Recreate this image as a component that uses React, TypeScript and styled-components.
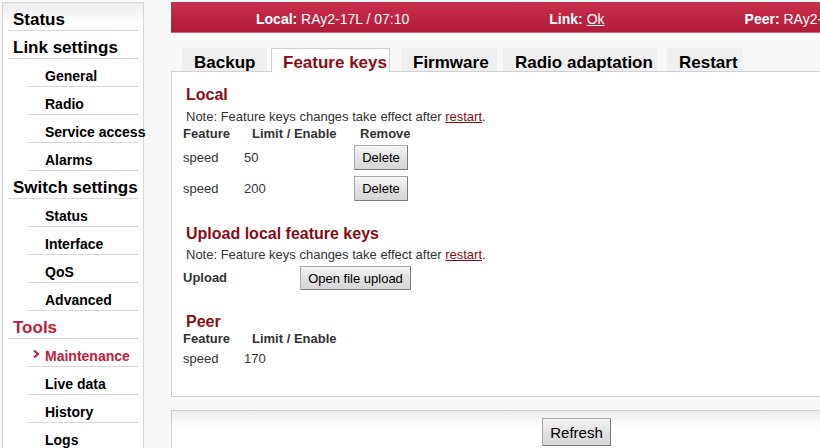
import React from "react";
import styled, { createGlobalStyle } from "styled-components";

const GlobalStyle = createGlobalStyle`
  html, body {
    margin: 0;
    padding: 0;
    overflow: hidden;
    background: #f8f8f8;
    font-family: "Liberation Sans", Arial, sans-serif;
    color: #000;
  }
`;

const Page = styled.div`
  width: 1000px;
  display: grid;
  grid-template-columns: 142px 812px;
  column-gap: 27px;
  align-items: start;
  padding-left: 2px;
`;

// ---------- sidebar ----------

const Sidebar = styled.nav`
  margin-top: 2px;
  border: 1px solid #d6d6d6;
  background: linear-gradient(#ececec, #ffffff 22px);
  padding-bottom: 20px;
`;

const NavItem = styled.div<{ $sub?: boolean; $active?: boolean }>`
  position: relative;
  margin: 0 5px 0 ${(p) => (p.$sub ? "24px" : "5px")};
  padding: 7px 0 0 ${(p) => (p.$sub ? "18px" : "5px")};
  line-height: 20px;
  border-bottom: 1px solid #d8d8d8;
  font-weight: bold;
  font-size: ${(p) => (p.$sub ? "14px" : "17px")};
  color: ${(p) => (p.$active ? "#c0203c" : "#000")};
  white-space: nowrap;
`;

const Chevron = styled.svg`
  position: absolute;
  left: 6px;
  top: 11px;
`;

// ---------- main ----------

const Main = styled.main`
  margin-top: 2px;
  display: flex;
  flex-direction: column;
`;

const Header = styled.header`
  height: 31px;
  box-sizing: border-box;
  padding: 4px 0 0 85px;
  border-bottom: 1px solid #d8667a;
  background: linear-gradient(#c9304e, #b01b37);
  color: #fff;
  display: flex;
  align-items: center;
  gap: 140px;
  font-size: 14px;
  white-space: nowrap;
  overflow: hidden;
`;

const HeadLabel = styled.b`
  font-weight: bold;
`;

const HeadLink = styled.span`
  text-decoration: underline;
`;

const TabBar = styled.div`
  display: flex;
  align-items: flex-end;
  padding: 15px 0 0 11px;
`;

const Tab = styled.div<{ $active?: boolean; $width: number; $gap: number }>`
  box-sizing: border-box;
  width: ${(p) => p.$width}px;
  margin-right: ${(p) => p.$gap}px;
  height: ${(p) => (p.$active ? 24 : 23)}px;
  padding: 5px 0 0 11px;
  line-height: 18px;
  font-size: 17px;
  font-weight: bold;
  white-space: nowrap;
  background: ${(p) => (p.$active ? "#fff" : "#efefef")};
  color: ${(p) => (p.$active ? "#8a0c14" : "#000")};
  border: 1px solid ${(p) => (p.$active ? "#d0d0d0" : "transparent")};
  border-bottom: none;
  margin-bottom: ${(p) => (p.$active ? "-1px" : "0")};
  position: relative;
  z-index: 1;
`;

const Panel = styled.section`
  background: #fff;
  border: 1px solid #d0d0d0;
  padding: 14px 0 27px 11px;
`;

const Heading = styled.h2<{ $top?: number }>`
  margin: ${(p) => p.$top ?? 0}px 0 0 3px;
  font-size: 16px;
  line-height: 18px;
  font-weight: bold;
  color: #8a0c14;
`;

const Note = styled.p<{ $top?: number }>`
  margin: ${(p) => p.$top ?? 4}px 0 0 3px;
  font-size: 13px;
  line-height: 16px;
  color: #333;
`;

const Restart = styled.a`
  color: #8a0c14;
  text-decoration: underline;
`;

const Table = styled.div<{ $top?: number }>`
  margin-top: ${(p) => p.$top ?? 1}px;
  display: grid;
  grid-template-columns: 59px 110px auto;
  justify-content: start;
  font-size: 13px;
  color: #333;
`;

const Th = styled.div<{ $pad?: number }>`
  font-weight: bold;
  line-height: 16px;
  padding-left: ${(p) => p.$pad ?? 0}px;
`;

const Td = styled.div<{ $h: number; $pad?: number }>`
  height: ${(p) => p.$h}px;
  display: flex;
  align-items: center;
  padding-left: ${(p) => p.$pad ?? 0}px;
`;

const Button = styled.button<{ $size?: number }>`
  font-family: "Liberation Sans", Arial, sans-serif;
  font-size: ${(p) => p.$size ?? 13}px;
  color: #000;
  padding: 0;
  white-space: nowrap;
  border: 1px solid #a8a8a8;
  border-right-color: #7a7a7a;
  border-bottom-color: #7a7a7a;
  border-radius: 1px;
  background: linear-gradient(#f6f6f6, #e2e2e2 50%, #d6d6d6);
  cursor: pointer;
`;

const DeleteButton = styled(Button)`
  height: 25px;
  width: 54px;
`;

const UploadRow = styled.div`
  display: grid;
  grid-template-columns: 117px auto;
  justify-content: start;
  align-items: center;
  height: 30px;
`;

const UploadLabel = styled.span`
  font-size: 13px;
  font-weight: bold;
  color: #333;
  margin-top: -2px;
`;

const UploadButton = styled(Button)`
  height: 24px;
  width: 111px;
`;

const Footer = styled.footer`
  margin-top: 13px;
  height: 40px;
  border: 1px solid #d0d0d0;
  border-bottom: none;
  background: linear-gradient(#ececec, #ffffff 16px);
  display: flex;
  justify-content: center;
  padding-top: 7px;
`;

const RefreshButton = styled(Button)`
  height: 28px;
  width: 69px;
  margin-left: -1px;
`;

const nav: { label: string; sub?: boolean; active?: boolean; current?: boolean }[] = [
  { label: "Status" },
  { label: "Link settings" },
  { label: "General", sub: true },
  { label: "Radio", sub: true },
  { label: "Service access", sub: true },
  { label: "Alarms", sub: true },
  { label: "Switch settings" },
  { label: "Status", sub: true },
  { label: "Interface", sub: true },
  { label: "QoS", sub: true },
  { label: "Advanced", sub: true },
  { label: "Tools", active: true },
  { label: "Maintenance", sub: true, active: true, current: true },
  { label: "Live data", sub: true },
  { label: "History", sub: true },
  { label: "Logs", sub: true },
  { label: "Monitor", sub: true },
];

const tabs = [
  { label: "Backup", width: 85, gap: 4 },
  { label: "Feature keys", width: 119, gap: 11 },
  { label: "Firmware", width: 96, gap: 6 },
  { label: "Radio adaptation", width: 154, gap: 10 },
  { label: "Restart", width: 76, gap: 0 },
];

const localKeys = [
  { feature: "speed", limit: "50" },
  { feature: "speed", limit: "200" },
];

export default function App() {
  return (
    <>
      <GlobalStyle />
      <Page>
        <Sidebar>
          {nav.map((n, i) => (
            <NavItem key={i} $sub={n.sub} $active={n.active}>
              {n.current && (
                <Chevron width="6" height="8" viewBox="0 0 6 8">
                  <path d="M1 0.5 L5 4 L1 7.5" fill="none" stroke="#c0203c" strokeWidth="2" />
                </Chevron>
              )}
              {n.label}
            </NavItem>
          ))}
        </Sidebar>

        <Main>
          <Header>
            <span>
              <HeadLabel>Local:</HeadLabel> RAy2-17L / 07:10
            </span>
            <span>
              <HeadLabel>Link:</HeadLabel> <HeadLink>Ok</HeadLink>
            </span>
            <span>
              <HeadLabel>Peer:</HeadLabel> RAy2-17L / 07:10
            </span>
          </Header>

          <TabBar>
            {tabs.map((t) => (
              <Tab key={t.label} $width={t.width} $gap={t.gap} $active={t.label === "Feature keys"}>
                {t.label}
              </Tab>
            ))}
          </TabBar>

          <Panel>
            <Heading>Local</Heading>
            <Note $top={5}>
              Note: Feature keys changes take effect after <Restart>restart</Restart>.
            </Note>
            <Table>
              <Th>Feature</Th>
              <Th $pad={10}>Limit / Enable</Th>
              <Th $pad={8}>Remove</Th>
              {localKeys.map((k, i) => (
                <React.Fragment key={i}>
                  <Td $h={31}>{k.feature}</Td>
                  <Td $h={31} $pad={2}>{k.limit}</Td>
                  <Td $h={31} $pad={2}>
                    <DeleteButton>Delete</DeleteButton>
                  </Td>
                </React.Fragment>
              ))}
            </Table>

            <Heading $top={21}>Upload local feature keys</Heading>
            <Note $top={4}>
              Note: Feature keys changes take effect after <Restart>restart</Restart>.
            </Note>
            <UploadRow>
              <UploadLabel>Upload</UploadLabel>
              <UploadButton>Open file upload</UploadButton>
            </UploadRow>

            <Heading $top={20}>Peer</Heading>
            <Table $top={0}>
              <Th>Feature</Th>
              <Th $pad={10}>Limit / Enable</Th>
              <Th />
              <Td $h={22}>speed</Td>
              <Td $h={22} $pad={2}>170</Td>
              <Td $h={22} />
            </Table>
          </Panel>

          <Footer>
            <RefreshButton $size={15}>Refresh</RefreshButton>
          </Footer>
        </Main>
      </Page>
    </>
  );
}
